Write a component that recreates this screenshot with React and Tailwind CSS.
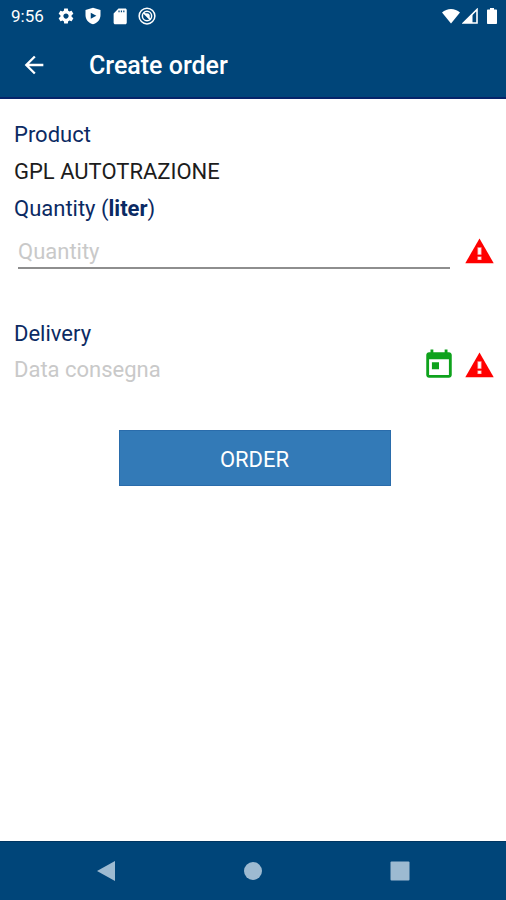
import React, { useState } from 'react';

const WarningIcon = () => (
  <svg viewBox="0 0 24 24" className="size-[31px] shrink-0 fill-[#ff0000]" aria-hidden="true">
    <path d="M1 21h22L12 2 1 21z" />
    <path d="M10.400 8.800h3.200v5.800h-3.200zM10.400 15.800h3.200v2.800h-3.200z" fill="#ff9c9c" />
    <path d="M11 9.300h2v4.800h-2zM11 16.200h2v2h-2z" fill="#fff" />
  </svg>
);

function StatusBar() {
  return (
    <div className="flex h-8 items-center pl-[11px] pr-[6px] text-white">
      <span className="w-[46px] text-[17px] leading-8">9:56</span>
      <div className="flex items-center gap-[9px]">
        <svg viewBox="0 0 24 24" className="size-[18px] fill-white" aria-hidden="true">
          <path d="M19.43 12.98c.04-.32.07-.64.07-.98s-.03-.66-.07-.98l2.11-1.65c.19-.15.24-.42.12-.64l-2-3.46c-.12-.22-.39-.3-.61-.22l-2.49 1c-.52-.4-1.08-.73-1.69-.98l-.38-2.65C14.46 2.18 14.25 2 14 2h-4c-.25 0-.46.18-.49.42l-.38 2.65c-.61.25-1.17.59-1.69.98l-2.49-1c-.23-.09-.49 0-.61.22l-2 3.46c-.13.22-.07.49.12.64l2.11 1.65c-.04.32-.07.65-.07.98s.03.66.07.98l-2.11 1.65c-.19.15-.24.42-.12.64l2 3.46c.12.22.39.3.61.22l2.49-1c.52.4 1.08.73 1.69.98l.38 2.65c.03.24.24.42.49.42h4c.25 0 .46-.18.49-.42l.38-2.65c.61-.25 1.17-.59 1.69-.98l2.49 1c.23.09.49 0 .61-.22l2-3.46c.12-.22.07-.49-.12-.64l-2.11-1.65zM12 15.5c-1.93 0-3.5-1.57-3.5-3.5s1.57-3.5 3.5-3.5 3.5 1.57 3.5 3.5-1.57 3.5-3.5 3.5z" />
        </svg>
        <svg viewBox="0 0 24 24" className="size-[18px] fill-white" aria-hidden="true">
          <path
            fillRule="evenodd"
            d="M12 1 2 4v7c0 5.600 4.200 10.700 10 12 5.800-1.300 10-6.400 10-12V4L12 1zM9 7.500l7.500 4-7.500 4v-8z"
          />
        </svg>
        <svg viewBox="0 0 24 24" className="size-[18px] fill-white" aria-hidden="true">
          <path d="M19 2H10L3.500 8.500V21c0 1.100.9 2 2 2h13.500c1.100 0 2-.9 2-2V4c0-1.100-.9-2-2-2zM11.500 7h-1.600V4.500h1.600V7zm3.200 0h-1.600V4.500h1.600V7zm3.200 0h-1.600V4.500h1.600V7z" />
        </svg>
        <svg viewBox="0 0 24 24" className="size-[18px] fill-none stroke-white" aria-hidden="true">
          <circle cx="12" cy="12" r="10.500" strokeWidth="2" />
          <circle cx="12" cy="12" r="6.200" strokeWidth="2" />
          <path strokeWidth="2.400" d="M7.500 7.500l9.500 9.500M11 9.500c2.500-.5 4 1 3.500 3.500" />
        </svg>
      </div>
      <div className="ml-auto flex items-center gap-[2px]">
        <svg viewBox="0 0 18 16" className="h-4 w-[18px] fill-white" aria-hidden="true">
          <path d="M9 15.500 0 4.500C5-.2 13-.2 18 4.500L9 15.500z" />
        </svg>
        <svg viewBox="0 0 16 16" className="size-4" aria-hidden="true">
          <path d="M15 1.500V15H1.500L15 1.500z" className="fill-none stroke-white" strokeWidth="1.600" />
          <path d="M10.500 6V15H1.500L10.500 6z" className="fill-white" />
        </svg>
        <svg viewBox="0 0 16 16" className="ml-1 size-4 fill-white" aria-hidden="true">
          <path d="M6 0h4v1.500h2c.6 0 1 .4 1 1V15c0 .6-.4 1-1 1H4c-.6 0-1-.4-1-1V2.500c0-.6.4-1 1-1h2V0z" />
        </svg>
      </div>
    </div>
  );
}

function App() {
  const [quantity, setQuantity] = useState('');
  const [date, setDate] = useState('');

  return (
    <div className="flex min-h-screen flex-col bg-white font-[Roboto,sans-serif] text-[22px]">
      <header className="border-b-2 border-[#06246a] bg-[#004579]">
        <StatusBar />
        <div className="flex h-[65px] items-center gap-[41px] pl-5 text-white">
          <button type="button" aria-label="Back">
            <svg viewBox="0 0 24 24" className="size-7 fill-white" aria-hidden="true">
              <path d="M20 11H7.830l5.590-5.590L12 4l-8 8 8 8 1.410-1.410L7.830 13H20v-2z" />
            </svg>
          </button>
          <h1 className="pt-[2px] text-[25px] font-medium leading-8">Create order</h1>
        </div>
      </header>

      <main className="flex grow flex-col pl-[14px] pr-[11px] pt-[17px] text-[#0b2a63]">
        <p className="leading-[37px]">Product</p>
        <p className="leading-[37px] text-[#1c1c1c]">GPL AUTOTRAZIONE</p>
        <label htmlFor="quantity" className="leading-[37px]">
          Quantity (<b>liter</b>)
        </label>
        <div className="flex h-12 items-center gap-[14px] pl-1">
          <input
            id="quantity"
            inputMode="decimal"
            placeholder="Quantity"
            value={quantity}
            onChange={(e) => setQuantity(e.target.value)}
            className="h-9 min-w-0 grow border-b-2 border-[#8e8e8e] pt-[2px] text-black outline-none placeholder:text-[#c9c9c9]"
          />
          <WarningIcon />
        </div>

        <div className="mt-10 flex items-end">
          <div className="flex min-w-0 grow flex-col">
            <label htmlFor="delivery" className="leading-[37px]">
              Delivery
            </label>
            <input
              id="delivery"
              placeholder="Data consegna"
              value={date}
              onChange={(e) => setDate(e.target.value)}
              className="mt-[6px] h-6 leading-6 text-black outline-none placeholder:text-[#c9c9c9]"
            />
          </div>
          <div className="flex items-center gap-2">
            <button type="button" aria-label="Choose date">
              <svg viewBox="0 0 24 24" className="size-[34px] fill-[#0ea21c]" aria-hidden="true">
                <path d="M19 3h-1V1h-2v2H8V1H6v2H5c-1.110 0-1.990.9-1.990 2L3 19c0 1.100.890 2 2 2h14c1.100 0 2-.9 2-2V5c0-1.100-.9-2-2-2zm0 16H5V8h14v11zM7 10h5v5H7z" />
              </svg>
            </button>
            <WarningIcon />
          </div>
        </div>

        <button
          type="button"
          className="mt-12 h-14 w-[272px] self-center border border-[#2a6cab] bg-[#337ab7] pt-[2px] text-white">
          ORDER
        </button>
      </main>

      <nav className="flex h-[59px] items-center justify-around border-t border-[#003561] bg-[#004579] px-[33px]">
        <button type="button" aria-label="Back">
          <svg viewBox="0 0 20 20" className="size-5 fill-[#9dbad1]" aria-hidden="true">
            <path d="M1 10 19 0v20z" />
          </svg>
        </button>
        <button type="button" aria-label="Home">
          <svg viewBox="0 0 20 20" className="size-5 fill-[#9dbad1]" aria-hidden="true">
            <circle cx="10" cy="10" r="9" />
          </svg>
        </button>
        <button type="button" aria-label="Recent apps">
          <svg viewBox="0 0 20 20" className="size-5 fill-[#9dbad1]" aria-hidden="true">
            <rect x="0.500" y="0.500" width="19" height="19" rx="1" />
          </svg>
        </button>
      </nav>
    </div>
  );
}

export default App;
